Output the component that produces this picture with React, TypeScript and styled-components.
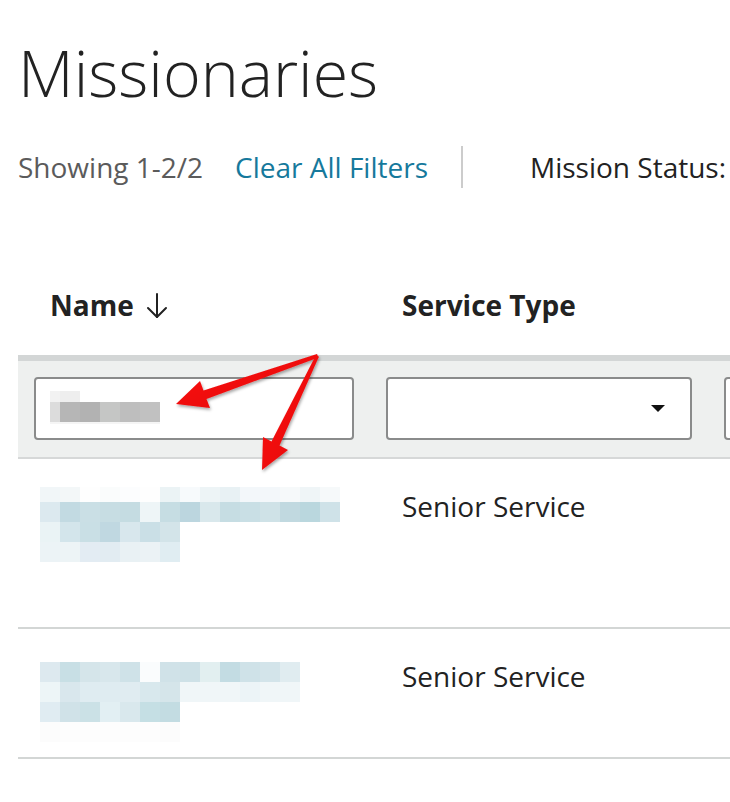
import React from 'react';
import styled, { createGlobalStyle } from 'styled-components';

const GlobalStyle = createGlobalStyle`
  html, body {
    margin: 0;
    padding: 0;
    background: #ffffff;
  }
  body {
    font-family: 'Open Sans', 'Liberation Sans', sans-serif;
    color: #222222;
  }
`;

const Page = styled.div`
  position: relative;
  width: 730px;
  height: 802px;
  overflow: hidden;
  box-sizing: border-box;
  padding: 27px 0 0 18px;
`;

const Title = styled.h1`
  margin: 0;
  font-weight: 300;
  font-size: 64.5px;
  line-height: 90px;
  color: #222222;
`;

const Toolbar = styled.div`
  display: flex;
  align-items: center;
  height: 42px;
  margin-top: 29px;
  font-size: 28px;
  white-space: nowrap;
`;

const Count = styled.span`
  color: #5b5b5b;
`;

const ClearLink = styled.a`
  color: #16799c;
  margin-left: 32px;
  text-decoration: none;
  cursor: pointer;
`;

const Divider = styled.span`
  width: 2px;
  height: 42px;
  background: #cccccc;
  margin: 0 67px 0 33px;
`;

const StatusLabel = styled.span`
  color: #222222;
`;

const Table = styled.div`
  width: 1100px;
  margin-top: 67px;
`;

const Grid = styled.div<{ $height?: number }>`
  display: grid;
  grid-template-columns: 352px 338px 1fr;
  ${(p) => (p.$height ? `height: ${p.$height}px;` : '')}
`;

const HeaderRow = styled(Grid)`
  align-items: center;
`;

const HeaderCell = styled.div`
  display: flex;
  align-items: center;
  gap: 12px;
  padding-left: 32px;
  font-weight: 700;
  font-size: 28px;
  color: #222222;
`;

const FilterBand = styled(Grid)`
  background: #eef0ef;
  border-top: 6px solid #d3d6d6;
  border-bottom: 2px solid #d6d8d8;
  padding: 16px 0 17px;
`;

const FilterCell = styled.div`
  padding: 0 16px;
`;

const FilterBox = styled.div`
  position: relative;
  box-sizing: border-box;
  height: 63px;
  background: #ffffff;
  border: 2px solid #8a8b8b;
  border-radius: 4px;
  padding: 12px 0 0 14px;
`;

const Caret = styled.span`
  position: absolute;
  right: 25px;
  top: 26px;
  width: 0;
  height: 0;
  border-left: 7px solid transparent;
  border-right: 7px solid transparent;
  border-top: 7px solid #111111;
`;

const DataRow = styled(Grid)`
  border-bottom: 2px solid #d3d6d5;
`;

const NameCell = styled.div<{ $top: number }>`
  padding: ${(p) => p.$top}px 0 0 22px;
`;

const TextCell = styled.div`
  padding: 29px 0 0 32px;
  font-size: 28px;
  line-height: 36px;
  color: #222222;
`;

const Mosaic = styled.div`
  display: flex;
  flex-direction: column;
`;

const MosaicLine = styled.div<{ $h: number }>`
  display: flex;
  height: ${(p) => p.$h}px;
`;

const Tile = styled.span<{ $w: number; $c: string }>`
  display: block;
  width: ${(p) => p.$w}px;
  height: 100%;
  background: ${(p) => p.$c};
`;

const Overlay = styled.svg`
  position: absolute;
  left: 0;
  top: 0;
  pointer-events: none;
`;

type Line = { h: number; w?: number[]; c: string[] };

const Pixels = ({ lines, w = 20 }: { lines: Line[]; w?: number }) => (
  <Mosaic>
    {lines.map((l, i) => (
      <MosaicLine key={i} $h={l.h}>
        {l.c.map((c, j) => (
          <Tile key={j} $w={l.w ? l.w[j] : w} $c={c} />
        ))}
      </MosaicLine>
    ))}
  </Mosaic>
);

const nameOne: Line[] = [
  { h: 15, c: ['#f1f6f8', '#f3f7f8', '#fefefe', '#fafcfc', '#fcfdfe', '#fefefe', '#ebf3f5', '#f7fafc', '#edf4f6', '#e8f1f4', '#f3f7fa', '#f3f7fa', '#f6f9fa', '#eff5f7', '#f6f9fa'] },
  { h: 20, c: ['#dce9ef', '#c2dae2', '#cadfe5', '#c7dde3', '#c5dce2', '#eef5f7', '#c6dde3', '#bcd6df', '#d9e8ec', '#c6dde3', '#c9dfe5', '#cfe2e7', '#c1d9e0', '#bad7de', '#cfe2e8'] },
  { h: 20, c: ['#eaf3f5', '#d3e5eb', '#c9dfe5', '#c0d8e1', '#d8e7ed', '#cadfe6', '#d3e4e9'] },
  { h: 20, c: ['#ecf3f6', '#edf4f6', '#e3ecf3', '#e2ecf2', '#e9f1f4', '#ebf2f5', '#e0edf2'] },
];

const nameTwo: Line[] = [
  { h: 20, c: ['#dde9ef', '#c8dfe5', '#d5e5ea', '#d8e7ec', '#cfe2e8', '#fafcfd', '#d0e2e8', '#cee1e7', '#e2eff0', '#c3dce3', '#cfe2e8', '#d3e4ea', '#e0ecf0'] },
  { h: 20, c: ['#edf5f7', '#d9e7ed', '#dfecf1', '#dfecf1', '#e0ecf1', '#d8e8ed', '#d5e5ea', '#f0f6f8', '#f0f6f8', '#f0f6f8', '#ecf4f7', '#f0f6f8', '#f0f6f8'] },
  { h: 20, c: ['#e0ecf2', '#d0e2e8', '#cbe1e6', '#e2eff3', '#d9e8ed', '#c5dfe4', '#c3dce2'] },
  { h: 20, c: ['#fcfcfc', '#fdfdfd', '#fdfdfd', '#fdfdfd', '#fdfdfd', '#fdfdfd', '#fcfcfc'] },
];

const typed: Line[] = [
  { h: 11, w: [10, 20], c: ['#f2f2f2', '#eeeeee'] },
  { h: 20, w: [10, 20, 20, 20, 20, 20], c: ['#dcdcdc', '#b6b6b6', '#b2b2b2', '#c5c6c5', '#bebebe', '#c1c1c1'] },
  { h: 2, w: [110], c: ['#f5f5f5'] },
];

const SortArrow = () => (
  <svg width="22" height="27" viewBox="0 0 22 27" fill="none" stroke="#222" strokeWidth="2" strokeLinecap="round" strokeLinejoin="round">
    <path d="M11 2v23" />
    <path d="M2 16l9 9 9-9" />
  </svg>
);

const Arrows = () => (
  <Overlay width="730" height="802" viewBox="0 0 730 802">
    <defs>
      <linearGradient id="red" x1="0" y1="0" x2="1" y2="1">
        <stop offset="0" stopColor="#ff1a1a" />
        <stop offset="1" stopColor="#e00000" />
      </linearGradient>
      <filter id="shade" x="-20%" y="-20%" width="140%" height="140%">
        <feDropShadow dx="1" dy="2" stdDeviation="1.5" floodColor="#000" floodOpacity="0.35" />
      </filter>
    </defs>
    <g fill="url(#red)" filter="url(#shade)">
      <polygon points="317,354 203.5,390.5 200,381 176,404 210,408 206.5,399 318.5,357.5" />
      <polygon points="315.5,356 271.5,441.5 263,437 262,470 288,450 279.5,445.5 319,356.5" />
    </g>
  </Overlay>
);

export default function App() {
  return (
    <>
      <GlobalStyle />
      <Page>
        <Title>Missionaries</Title>
        <Toolbar>
          <Count>Showing 1-2/2</Count>
          <ClearLink>Clear All Filters</ClearLink>
          <Divider />
          <StatusLabel>Mission Status:</StatusLabel>
        </Toolbar>
        <Table>
          <HeaderRow $height={100}>
            <HeaderCell>
              Name <SortArrow />
            </HeaderCell>
            <HeaderCell>Service Type</HeaderCell>
            <HeaderCell />
          </HeaderRow>
          <FilterBand>
            <FilterCell>
              <FilterBox>
                <Pixels lines={typed} />
              </FilterBox>
            </FilterCell>
            <FilterCell>
              <FilterBox>
                <Caret />
              </FilterBox>
            </FilterCell>
            <FilterCell>
              <FilterBox />
            </FilterCell>
          </FilterBand>
          <DataRow $height={168}>
            <NameCell $top={28}>
              <Pixels lines={nameOne} />
            </NameCell>
            <TextCell>Senior Service</TextCell>
            <div />
          </DataRow>
          <DataRow $height={128}>
            <NameCell $top={33}>
              <Pixels lines={nameTwo} />
            </NameCell>
            <TextCell>Senior Service</TextCell>
            <div />
          </DataRow>
        </Table>
        <Arrows />
      </Page>
    </>
  );
}
